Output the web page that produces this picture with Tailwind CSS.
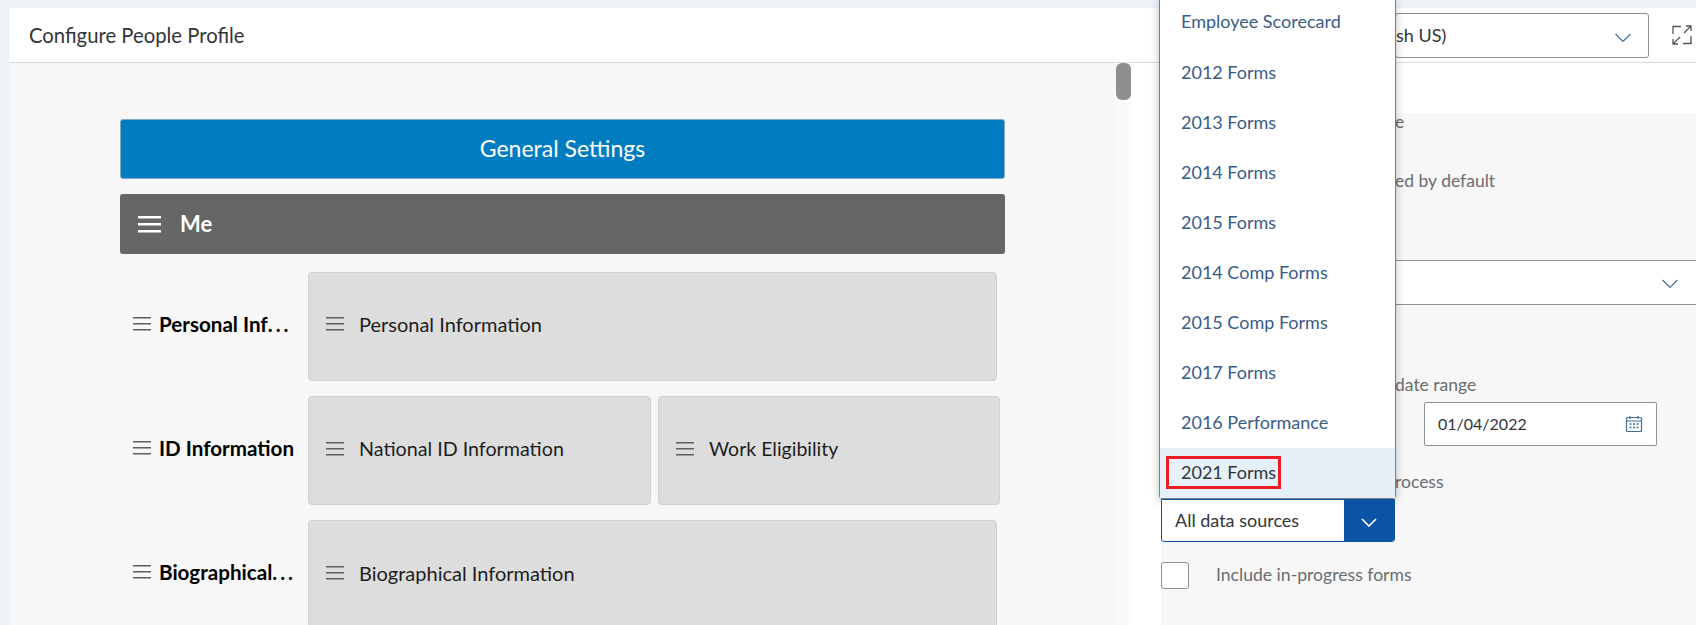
<!DOCTYPE html>
<html>
<head>
<meta charset="utf-8">
<script src="https://cdn.jsdelivr.net/npm/@tailwindcss/browser@4"></script>
</head>
<body class="relative h-[625px] w-[1696px] overflow-hidden bg-[#edf2f7] pt-2 pl-[9px] font-['Lato',sans-serif]">

<!-- top bar -->
<div class="flex h-[55px] items-center border-b border-[#d9d9d9] bg-white pl-5">
    <span class="text-[20.3px] text-[#32363a]">Configure People Profile</span>
    <div class="ml-auto flex h-[45px] w-[254px] items-center justify-between rounded-[3px] border border-[#89919a] pr-[16px] text-lg text-[#32363a]">
        <span>sh US)</span>
        <svg class="mt-[5px] size-[18px] text-[#3f7099]" viewBox="0 0 18 18" fill="none" stroke="currentColor" stroke-width="1.2"><path d="M1.5 5 9 12.5 16.500 5"/></svg>
    </div>
    <div class="flex w-[47px] justify-end">
        <svg class="mr-[4px] size-[20px] text-[#555555]" viewBox="0 0 20 20" fill="none" stroke="currentColor" stroke-width="1.3"><path d="M1 9V1.500h8M19 11v7.500h-8M12 8l7-7M14 1h5v5M8 12l-7 7M1 14v5h5"/></svg>
    </div>
</div>

<div class="flex h-[563px]">
    <!-- left column -->
    <div class="w-[1107px] bg-[#f7f7f7] pt-[56px] pl-[111px] pr-[111px]">
        <div class="flex h-[60px] items-center justify-center rounded-[3px] border border-[#7fa9c4] bg-[#027cc0] pb-[2px] text-[23px] text-white">General Settings</div>
        <div class="mt-[15px] flex h-[60px] items-center gap-[19px] rounded-[3px] bg-[#666666] pl-[18px] text-[22px] font-bold text-white">
            <svg class="h-[18px] w-[23px]" viewBox="0 0 23 18" fill="currentColor"><rect y="1" width="23" height="2.5"/><rect y="8" width="23" height="2.5"/><rect y="15" width="23" height="2.500"/></svg>
            <span class="pb-[2px]">Me</span>
        </div>

        <div class="mt-[18px] flex h-[109px] items-center">
            <div class="flex w-[188px] items-center gap-[8px] pb-[5px] pl-[13px] text-[20.6px] font-bold text-black">
                <svg class="h-[16px] w-[18px] shrink-0 text-[#5f5f5f]" viewBox="0 0 18 16" fill="currentColor"><rect y="1" width="18" height="1.5"/><rect y="7" width="18" height="1.5"/><rect y="13" width="18" height="1.5"/></svg>
                <span class="truncate">Personal Inf<span class="tracking-[3px]">...</span></span>
            </div>
            <div class="flex h-full w-[689px] items-center gap-[15px] rounded-[4px] border border-[#d0d0d0] bg-[#dddddd] pb-[5px] pl-[17px] text-xl text-[#1d1d1d]">
                <svg class="h-[16px] w-[18px] shrink-0 text-[#5f5f5f]" viewBox="0 0 18 16" fill="currentColor"><rect y="1" width="18" height="1.5"/><rect y="7" width="18" height="1.5"/><rect y="13" width="18" height="1.5"/></svg>
                <span>Personal Information</span>
            </div>
        </div>

        <div class="mt-[15px] flex h-[109px] items-center">
            <div class="flex w-[188px] items-center gap-[8px] pb-[5px] pl-[13px] text-[20.6px] font-bold text-black">
                <svg class="h-[16px] w-[18px] shrink-0 text-[#5f5f5f]" viewBox="0 0 18 16" fill="currentColor"><rect y="1" width="18" height="1.5"/><rect y="7" width="18" height="1.5"/><rect y="13" width="18" height="1.5"/></svg>
                <span class="truncate">ID Information</span>
            </div>
            <div class="flex h-full w-[343px] items-center gap-[15px] rounded-[4px] border border-[#d0d0d0] bg-[#dddddd] pb-[4px] pl-[17px] text-[19.7px] text-[#1d1d1d]">
                <svg class="h-[16px] w-[18px] shrink-0 text-[#5f5f5f]" viewBox="0 0 18 16" fill="currentColor"><rect y="1" width="18" height="1.5"/><rect y="7" width="18" height="1.5"/><rect y="13" width="18" height="1.5"/></svg>
                <span>National ID Information</span>
            </div>
            <div class="ml-[7px] flex h-full w-[342px] items-center gap-[15px] rounded-[4px] border border-[#d0d0d0] bg-[#dddddd] pb-[4px] pl-[17px] text-[19.5px] text-[#1d1d1d]">
                <svg class="h-[16px] w-[18px] shrink-0 text-[#5f5f5f]" viewBox="0 0 18 16" fill="currentColor"><rect y="1" width="18" height="1.5"/><rect y="7" width="18" height="1.5"/><rect y="13" width="18" height="1.5"/></svg>
                <span>Work Eligibility</span>
            </div>
        </div>

        <div class="mt-[15px] flex h-[109px] items-center">
            <div class="flex w-[188px] items-center gap-[8px] pb-[5px] pl-[13px] text-[20.6px] font-bold text-black">
                <svg class="h-[16px] w-[18px] shrink-0 text-[#5f5f5f]" viewBox="0 0 18 16" fill="currentColor"><rect y="1" width="18" height="1.5"/><rect y="7" width="18" height="1.5"/><rect y="13" width="18" height="1.5"/></svg>
                <span class="truncate">Biographical<span class="tracking-[3px]">...</span></span>
            </div>
            <div class="flex h-full w-[689px] items-center gap-[15px] rounded-[4px] border border-[#d0d0d0] bg-[#dddddd] pb-[4px] pl-[17px] text-xl text-[#1d1d1d]">
                <svg class="h-[16px] w-[18px] shrink-0 text-[#5f5f5f]" viewBox="0 0 18 16" fill="currentColor"><rect y="1" width="18" height="1.5"/><rect y="7" width="18" height="1.5"/><rect y="13" width="18" height="1.5"/></svg>
                <span>Biographical Information</span>
            </div>
        </div>
    </div>

    <!-- scrollbar -->
    <div class="w-4 bg-[#fafafa]">
        <div class="h-[37px] w-[15px] rounded-md bg-[#8f8f8f]"></div>
    </div>
    <div class="w-[29px] bg-white"></div>

    <!-- right panel -->
    <div class="flex-1 bg-[#f7f7f7] text-[17.5px] text-[#6a6d70]">
        <div class="h-[50px] bg-white"></div>
        <div class="pl-[234px]">
            <div class="h-[18px] leading-[18px]">e</div>
            <div class="mt-[41px] leading-[18px]">ed by default</div>
            <div class="mt-[70px] -ml-[234px] flex h-[45px] items-center justify-end rounded-l-[3px] border-t border-b border-[#89919a] bg-white pr-[17px]">
                <svg class="mt-[3px] size-[18px] text-[#3f7099]" viewBox="0 0 18 18" fill="none" stroke="currentColor" stroke-width="1.2"><path d="M1.5 5 9 12.5 16.500 5"/></svg>
            </div>
            <div class="mt-[71px] leading-[18px]">date range</div>
            <div class="mt-[8px] ml-[29px] flex h-[44px] w-[233px] items-center justify-between rounded-[2px] border border-[#89919a] bg-white pl-[13px] pr-[13px] text-base text-[#32363a]">
                <span>01/04/2022</span>
                <svg class="size-[18px] text-[#3f7099]" viewBox="0 0 18 18" fill="none" stroke="currentColor" stroke-width="1.2"><rect x="1.500" y="2.500" width="15" height="14" rx="1"/><path d="M1.500 6h15M5 1v3M13 1v3"/><path d="M4.500 9h2M8 9h2M11.500 9h2M4.500 12.500h2M8 12.500h2M11.500 12.500h2" stroke-width="1.6"/></svg>
            </div>
            <div class="mt-[27px] leading-[18px]">rocess</div>
        </div>
    </div>
</div>

<!-- open dropdown, drawn over the panel -->
<div class="absolute top-0 left-[1159px] w-[237px] rounded-b-[4px] border-x border-b border-[#7b7f84] bg-white text-lg text-[#3a5c86] shadow-[0_2px_8px_rgba(0,0,0,0.25)]">
    <div class="flex h-[48px] items-center pb-[6px] pl-[21px]">Employee Scorecard</div>
    <div class="flex h-[50px] items-center pb-[3px] pl-[21px]">2012 Forms</div>
    <div class="flex h-[50px] items-center pb-[3px] pl-[21px]">2013 Forms</div>
    <div class="flex h-[50px] items-center pb-[3px] pl-[21px]">2014 Forms</div>
    <div class="flex h-[50px] items-center pb-[2px] pl-[21px]">2015 Forms</div>
    <div class="flex h-[50px] items-center pb-[2px] pl-[21px]">2014 Comp Forms</div>
    <div class="flex h-[50px] items-center pb-[2px] pl-[21px]">2015 Comp Forms</div>
    <div class="flex h-[50px] items-center pb-[2px] pl-[21px]">2017 Forms</div>
    <div class="flex h-[50px] items-center pb-[2px] pl-[21px]">2016 Performance</div>
    <div class="flex h-[50px] items-center bg-[#e5f0f8] pb-[2px] pl-[6px] text-[#32363a]">
        <span class="flex h-[33px] w-[115px] items-center border-[3px] border-[#ed1c24] pl-[12px]">2021 Forms</span>
    </div>
</div>

<!-- select below the dropdown, with its checkbox -->
<div class="absolute top-[499px] left-[1161px] w-[234px]">
    <div class="flex h-[43px] items-stretch overflow-hidden rounded-b-[3px] border border-[#0a53a5] bg-white text-lg text-[#32363a]">
        <span class="flex flex-1 items-center pb-[2px] pl-[13px]">All data sources</span>
        <span class="flex w-[50px] items-center justify-center bg-[#0a53a5] text-white">
            <svg class="mt-[2px] size-[18px]" viewBox="0 0 18 18" fill="none" stroke="currentColor" stroke-width="1.6"><path d="M2 6 9 13l7-7"/></svg>
        </span>
    </div>
    <div class="mt-[20px] flex items-center gap-[27px] whitespace-nowrap text-[17.6px] text-[#6a6d70]">
        <span class="h-[27px] w-[28px] shrink-0 rounded-[3px] border border-[#89919a] bg-white"></span>
        <span>Include in-progress forms</span>
    </div>
</div>

</body>
</html>
